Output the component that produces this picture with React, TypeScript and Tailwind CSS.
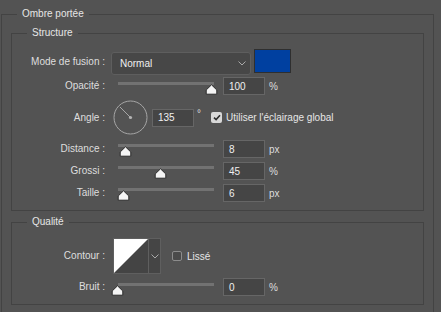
import React from "react";

const Thumb = ({ left }: { left: number }) => (
  <svg
    className="absolute top-[3px]"
    style={{ left }}
    width="13"
    height="11"
    viewBox="0 0 13 11"
  >
    <path
      d="M6.5 0.8 L11.8 6 L11.8 10.2 L1.2 10.2 L1.2 6 Z"
      fill="#f4f4f4"
      stroke="#2a2a2a"
      strokeWidth="1"
      strokeLinejoin="round"
    />
  </svg>
);

const Slider = ({ left, top = "mt-[3px]" }: { left: number; top?: string }) => (
  <div className={`relative ml-[13px] h-[14px] w-[96px] self-start ${top}`}>
    <div className="absolute left-0 right-0 top-[1px] h-[3px] bg-[#727272]" />
    <Thumb left={left} />
  </div>
);

const NumBox = ({ value }: { value: string }) => (
  <div className="flex h-[18px] w-[42px] items-center border border-[#666666] bg-[#454545] pl-[5px] text-[10px] text-[#f0f0f0]">
    {value}
  </div>
);

const Label = ({ children }: { children: React.ReactNode }) => (
  <div className="w-[93px] shrink-0 text-right text-[10px] leading-[12px] text-[#dedede]">
    {children}
  </div>
);

const SliderRow = ({
  label,
  value,
  unit,
  left,
  top,
  className,
}: {
  label: string;
  value: string;
  unit: string;
  left: number;
  top?: string;
  className: string;
}) => (
  <div className={`flex h-[18px] items-center ${className}`}>
    <Label>{label}</Label>
    <Slider left={left} top={top} />
    <div className="ml-[9px]">
      <NumBox value={value} />
    </div>
    <span className="ml-[4px] text-[10px] text-[#dedede]">{unit}</span>
  </div>
);

const Legend = ({ children }: { children: React.ReactNode }) => (
  <legend className="ml-[15px] px-[5px] text-[10px] leading-[12px] text-[#e6e6e6]">
    {children}
  </legend>
);

const Check = () => (
  <svg width="8" height="7" viewBox="0 0 8 7">
    <path d="M1 3.6 L3.1 5.6 L7 1.2" fill="none" stroke="#2e2e2e" strokeWidth="1.6" />
  </svg>
);

const Chevron = () => (
  <svg width="8" height="5" viewBox="0 0 8 5">
    <path d="M0.5 0.5 L4 4 L7.5 0.5" fill="none" stroke="#a9a9a9" strokeWidth="1" />
  </svg>
);

export default function App() {
  return (
    <div
      className="h-[312px] w-[441px] overflow-hidden bg-[#535353] pl-[1px] pt-[8px] select-none"
      style={{ fontFamily: '"Liberation Sans", Arial, sans-serif' }}
    >
      <fieldset className="w-[433px] border border-[#434343] pb-[40px]">
        <Legend>Ombre portée</Legend>

        <fieldset className="ml-[9px] mt-[7px] w-[413px] border border-[#434343] pb-[8px]">
          <Legend>Structure</Legend>

          <div className="mt-[10px] flex h-[26px] items-center">
            <Label>Mode de fusion :</Label>
            <div className="ml-[6px] flex h-[23px] w-[140px] items-center justify-between self-end rounded-[3px] border border-[#5e5e5e] bg-[#474747] pl-[8px] pr-[4px] text-[10px] text-[#f0f0f0]">
              <span>Normal</span>
              <Chevron />
            </div>
            <div className="ml-[3px] h-[24px] w-[37px] self-start border border-[#2f2f2f] bg-[#0040a0]" />
          </div>

          <SliderRow className="mt-[2px]" label="Opacité :" value="100" unit="%" left={87} top="mt-[4px]" />

          <div className="mt-[5px] flex h-[35px] items-center">
            <Label>Angle :</Label>
            <svg className="ml-[8px]" width="35" height="35" viewBox="0 0 35 35">
              <circle cx="17.5" cy="17.5" r="16.5" fill="none" stroke="#a6a6a6" strokeWidth="1" />
              <line x1="17.5" y1="17.5" x2="7" y2="7" stroke="#a6a6a6" strokeWidth="1" />
              <circle cx="17.5" cy="17.5" r="1.6" fill="#b5b5b5" />
            </svg>
            <div className="ml-[4px]">
              <NumBox value="135" />
            </div>
            <span className="ml-[3px] -mt-[8px] text-[10px] text-[#dedede]">°</span>
            <div className="ml-[10px] flex h-[11px] w-[11px] items-center justify-center rounded-[2px] bg-[#d8d8d8]">
              <Check />
            </div>
            <span className="ml-[4px] text-[10px] text-[#e6e6e6]">Utiliser l'éclairage global</span>
          </div>

          <SliderRow className="mt-[5px]" label="Distance :" value="8" unit="px" left={1} />
          <SliderRow className="mt-[4px]" label="Grossi :" value="45" unit="%" left={36} />
          <SliderRow className="mt-[4px]" label="Taille :" value="6" unit="px" left={-1} />
        </fieldset>

        <fieldset className="ml-[9px] mt-[5px] w-[413px] border border-[#434343] pb-[8px]">
          <Legend>Qualité</Legend>

          <div className="mt-[10px] flex h-[36px] items-center">
            <Label>Contour :</Label>
            <div className="ml-[8px] flex h-[36px] border border-[#5f5f5f]">
              <svg width="34" height="34" viewBox="0 0 34 34">
                <rect width="34" height="34" fill="#444444" />
                <path d="M0 0 L34 0 L0 34 Z" fill="#ffffff" />
              </svg>
              <div className="flex w-[12px] items-center justify-center border-l border-[#5f5f5f] bg-[#454545]">
                <Chevron />
              </div>
            </div>
            <div className="ml-[11px] h-[10px] w-[10px] rounded-[2px] border border-[#8c8c8c] bg-[#4a4a4a]" />
            <span className="ml-[5px] text-[10px] text-[#e6e6e6]">Lissé</span>
          </div>

          <SliderRow className="mt-[4px]" label="Bruit :" value="0" unit="%" left={-7} top="mt-[4px]" />
        </fieldset>

        <div className="ml-[115px] mt-[4px] flex items-center gap-[8px] text-[10px] text-[#e6e6e6]">
          <div className="h-[10px] w-[10px] rounded-[2px] bg-[#e8e8e8]" />
          <span>Définir par défaut</span>
          <span>Rétablir les valeurs par défaut</span>
        </div>
      </fieldset>
    </div>
  );
}
